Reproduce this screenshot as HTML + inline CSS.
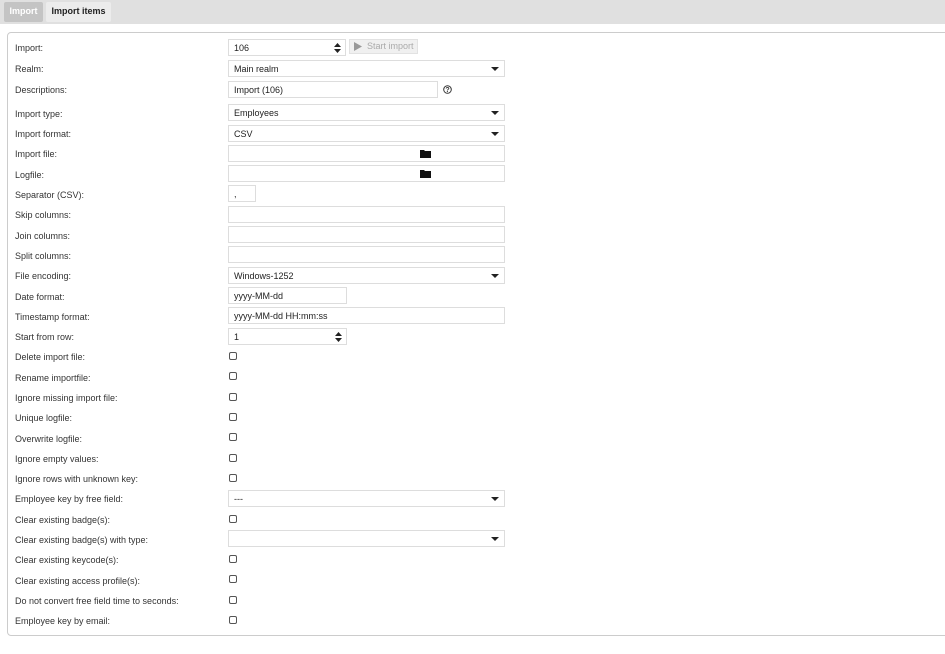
<!DOCTYPE html>
<html><head><meta charset="utf-8"><style>
*{box-sizing:border-box;margin:0;padding:0}
body{width:945px;height:654px;background:#fff;font-family:"Liberation Sans",sans-serif;font-size:9px;color:#333;position:relative;overflow:hidden;white-space:nowrap}
.bar{position:absolute;left:0;top:0;width:945px;height:24px;background:#e0e0e0}
.tab{position:absolute;top:2px;height:20px;line-height:19px;font-weight:bold;font-size:9px;border-radius:2px;text-align:center}
.panel{position:absolute;left:7px;top:32px;width:950px;height:604px;border:1px solid #ccc;border-radius:4px}
.lbl{position:absolute;left:15px;line-height:14px;margin-top:1px}
.f{position:absolute;left:228px;height:17px;border:1px solid #ddd;background:#fff;padding-left:5px;line-height:16px;color:#222}
.dd::after{content:"";position:absolute;right:5px;top:6px;border-left:4px solid transparent;border-right:4px solid transparent;border-top:4px solid #222}
.sp svg{position:absolute;right:4px;top:3px}
.fold{position:absolute;left:191px;top:3px}
.cb{position:absolute;left:229px;width:8px;height:8px;border:1px solid #555;border-radius:2px}
</style></head><body>
<div class="bar"></div>
<div class="tab" style="left:4px;width:39px;background:#c4c4c4;color:#fff">Import</div>
<div class="tab" style="left:46px;width:65px;background:#ececec;color:#222">Import items</div>
<div class="panel"></div>

<div class="lbl" style="top:40px">Import:</div>
<div class="f sp" style="top:39px;width:118px">106<svg width="7" height="10" viewBox="0 0 7 10"><path d="M0 4L3.5 0L7 4ZM0 6L3.5 10L7 6Z" fill="#222"/></svg></div>
<div style="position:absolute;left:349px;top:39px;width:69px;height:15px;background:#f0f0f0;border:1px solid #e2e2e2;color:#aaa;font-size:9px;line-height:13px;padding-left:17px">Start import<svg style="position:absolute;left:4px;top:2px" width="8" height="9"><path d="M0 0L8 4.5L0 9Z" fill="#999"/></svg></div>

<div class="lbl" style="top:61px">Realm:</div>
<div class="f dd" style="top:60px;width:277px">Main realm</div>
<div class="lbl" style="top:82px">Descriptions:</div>
<div class="f" style="top:81px;width:210px">Import (106)</div>
<svg style="position:absolute;left:443px;top:85px" width="9" height="9"><circle cx="4.5" cy="4.5" r="3.8" fill="none" stroke="#333" stroke-width="1"/><text x="4.5" y="7" font-size="7" text-anchor="middle" font-family="Liberation Sans" font-weight="bold" fill="#333">?</text></svg>

<div class="lbl" style="top:106px">Import type:</div>
<div class="f dd" style="top:104px;width:277px">Employees</div>
<div class="lbl" style="top:126px">Import format:</div>
<div class="f dd" style="top:125px;width:277px">CSV</div>
<div class="lbl" style="top:146px">Import file:</div>
<div class="f" style="top:145px;width:277px"><svg class="fold" width="11" height="9"><path d="M0 1h4l1 1h6v7H0z" fill="#111"/></svg></div>
<div class="lbl" style="top:167px">Logfile:</div>
<div class="f" style="top:165px;width:277px"><svg class="fold" width="11" height="9"><path d="M0 1h4l1 1h6v7H0z" fill="#111"/></svg></div>
<div class="lbl" style="top:187px">Separator (CSV):</div>
<div class="f" style="top:185px;width:28px">,</div>
<div class="lbl" style="top:207px">Skip columns:</div>
<div class="f" style="top:206px;width:277px"></div>
<div class="lbl" style="top:228px">Join columns:</div>
<div class="f" style="top:226px;width:277px"></div>
<div class="lbl" style="top:248px">Split columns:</div>
<div class="f" style="top:246px;width:277px"></div>
<div class="lbl" style="top:268px">File encoding:</div>
<div class="f dd" style="top:267px;width:277px">Windows-1252</div>
<div class="lbl" style="top:289px">Date format:</div>
<div class="f" style="top:287px;width:119px">yyyy-MM-dd</div>
<div class="lbl" style="top:309px">Timestamp format:</div>
<div class="f" style="top:307px;width:277px">yyyy-MM-dd HH:mm:ss</div>
<div class="lbl" style="top:329px">Start from row:</div>
<div class="f sp" style="top:328px;width:119px">1<svg width="7" height="10" viewBox="0 0 7 10"><path d="M0 4L3.5 0L7 4ZM0 6L3.5 10L7 6Z" fill="#222"/></svg></div>

<div class="lbl" style="top:349px">Delete import file:</div><div class="cb" style="top:352px"></div>
<div class="lbl" style="top:370px">Rename importfile:</div><div class="cb" style="top:372px"></div>
<div class="lbl" style="top:390px">Ignore missing import file:</div><div class="cb" style="top:393px"></div>
<div class="lbl" style="top:410px">Unique logfile:</div><div class="cb" style="top:413px"></div>
<div class="lbl" style="top:431px">Overwrite logfile:</div><div class="cb" style="top:433px"></div>
<div class="lbl" style="top:451px">Ignore empty values:</div><div class="cb" style="top:454px"></div>
<div class="lbl" style="top:471px">Ignore rows with unknown key:</div><div class="cb" style="top:474px"></div>
<div class="lbl" style="top:491px">Employee key by free field:</div>
<div class="f dd" style="top:490px;width:277px">---</div>
<div class="lbl" style="top:512px">Clear existing badge(s):</div><div class="cb" style="top:515px"></div>
<div class="lbl" style="top:532px">Clear existing badge(s) with type:</div>
<div class="f dd" style="top:530px;width:277px"></div>
<div class="lbl" style="top:552px">Clear existing keycode(s):</div><div class="cb" style="top:555px"></div>
<div class="lbl" style="top:573px">Clear existing access profile(s):</div><div class="cb" style="top:575px"></div>
<div class="lbl" style="top:593px">Do not convert free field time to seconds:</div><div class="cb" style="top:596px"></div>
<div class="lbl" style="top:613px">Employee key by email:</div><div class="cb" style="top:616px"></div>
</body></html>
